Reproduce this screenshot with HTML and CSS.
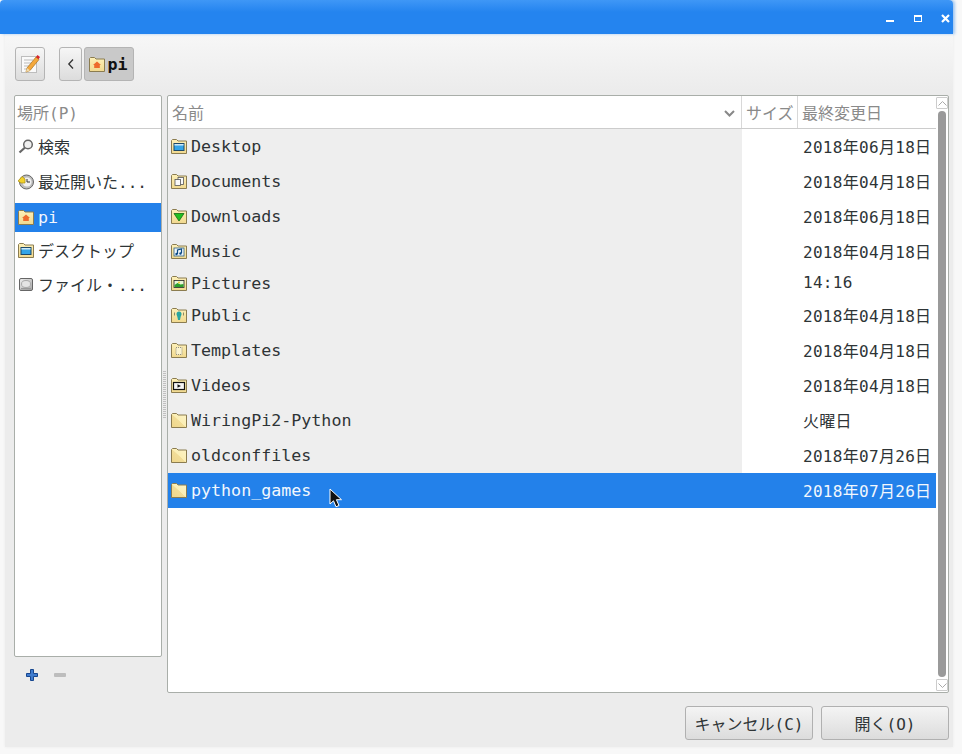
FILE: index.html
```html
<!DOCTYPE html>
<html lang="ja">
<head>
<meta charset="utf-8">
<title>開く</title>
<link rel="stylesheet" href="styles.css">
</head>
<body>
<svg class="defs" width="0" height="0" aria-hidden="true">
  <defs>
    <linearGradient id="fg" x1="0" y1="0" x2="0" y2="1"><stop offset="0" stop-color="#fdf0b8"/><stop offset="1" stop-color="#f1d98f"/></linearGradient>
    <linearGradient id="fp" x1="1" y1="0" x2="0" y2="1"><stop offset="0" stop-color="#fdf4c8"/><stop offset=".5" stop-color="#fbeeb4"/><stop offset=".52" stop-color="#f2dd98"/><stop offset="1" stop-color="#efd68a"/></linearGradient>
    <linearGradient id="gr" x1="0" y1="0" x2="1" y2="1"><stop offset="0" stop-color="#eee"/><stop offset="1" stop-color="#a8a8a8"/></linearGradient>
    <symbol id="folder" viewBox="0 0 16 15">
      <path d="M.5 3V1.500l1-1h4l1.500 1.500h8.500v12.500H.5z" fill="url(#fg)" stroke="#8b7c50"/>
    </symbol>
    <symbol id="folder-plain" viewBox="0 0 16 15">
      <path d="M.5 3V1.500l1-1h4l1.500 1.500h8.500v12.500H.5z" fill="url(#fp)" stroke="#8b7c50"/>
    </symbol>
  </defs>
</svg>
<div class="window">
  <header class="titlebar">
    <span class="wc wc-min"></span>
    <span class="wc wc-max"></span>
    <svg class="wc-close" width="9" height="9" viewBox="0 0 9 9"><path d="M1 1l7 7M8 1L1 8" stroke="#fff" stroke-width="2.200"/></svg>
  </header>
  <main class="content">
    <div class="toolbar">
      <button class="tbtn tbtn-edit">
        <svg width="20" height="22" viewBox="0 0 20 22">
          <rect x="1.500" y="3.500" width="15" height="16" fill="#fafafa" stroke="#bdbdbd"/>
          <path d="M4 7h9M4 10h7M4 13h5M4 16h7" stroke="#bbb"/>
          <path d="M7 15l9-11 3 2.500-9 11-4 1.500z" fill="#f4a83c" stroke="#a8701c" stroke-width=".7"/>
          <path d="M16 4l1.500-2 2.500 2-1.500 2.200z" fill="#d8232a"/>
          <path d="M7 15l-1 4 4-1.500z" fill="#f1dcae"/>
        </svg>
      </button>
      <button class="tbtn tbtn-back">
        <svg width="8" height="12" viewBox="0 0 8 12"><path d="M6 1.500L1.800 6 6 10.500" fill="none" stroke="#333" stroke-width="1.300"/></svg>
      </button>
      <button class="tbtn tbtn-path">
        <svg class="ico" width="16" height="15"><use href="#folder"/><path d="M8 4.500l4 3.500h-1.200v3H5.200V8H4z" fill="#ee6a2c"/></svg>
        <b>pi</b>
      </button>
    </div>

    <div class="panes">
      <div class="side-col">
        <nav class="sidebar">
          <div class="side-head">場所(P)</div>
          <div class="side-row">
            <svg class="ico" width="16" height="15" viewBox="0 0 16 15"><circle cx="10" cy="5.500" r="4.300" fill="#f0f0f0" stroke="#666" stroke-width="1.500"/><path d="M7 8.500L1.500 13.500" stroke="#666" stroke-width="2.200"/></svg>
            <span>検索</span>
          </div>
          <div class="side-row">
            <svg class="ico" width="16" height="16" viewBox="0 0 16 16"><circle cx="8.500" cy="8" r="7" fill="#bdbdbd" stroke="#666"/><circle cx="9" cy="8" r="4.500" fill="#f0f0f0"/><path d="M9 5v3h3" fill="none" stroke="#333"/><path d="M0 7l4-4.500 3 2.500v4H3z" fill="#f2d22c" stroke="#a98c10" stroke-width=".7"/></svg>
            <span>最近開いた...</span>
          </div>
          <div class="side-row side-row-sel">
            <svg class="ico" width="16" height="15"><use href="#folder"/><path d="M8 4.500l4 3.500h-1.200v3H5.200V8H4z" fill="#ee6a2c"/></svg>
            <span>pi</span>
          </div>
          <div class="side-row side-row-short">
            <svg class="ico" width="16" height="15"><use href="#folder"/><rect x="3" y="4.500" width="10" height="7" fill="#33a4e8" stroke="#1c4868"/><rect x="3.500" y="5" width="9" height="1.500" fill="#cfe8f5"/></svg>
            <span>デスクトップ</span>
          </div>
          <div class="side-row">
            <svg class="ico" width="16" height="15" viewBox="0 0 16 15"><rect x="1.500" y="1.500" width="13" height="12" rx="1.500" fill="url(#gr)" stroke="#666"/><ellipse cx="8" cy="7" rx="4.500" ry="3.500" fill="#e4e4e4" stroke="#aaa"/><rect x="3" y="11" width="10" height="1.500" fill="#999"/></svg>
            <span>ファイル・...</span>
          </div>
        </nav>
        <div class="side-actions">
          <svg width="12" height="12" viewBox="0 0 12 12"><path d="M4.500.5h3v4h4v3h-4v4h-3v-4h-4v-3h4z" fill="#3f7ccf" stroke="#17468f"/></svg>
          <span class="minus"></span>
        </div>
      </div>

      <div class="grip"></div>

      <section class="list">
        <div class="list-main">
          <div class="list-head">
            <div class="col col-name">名前
              <svg width="11" height="7" viewBox="0 0 11 7"><path d="M1 1l4.500 4.500L10 1" fill="none" stroke="#888" stroke-width="2"/></svg>
            </div>
            <div class="col col-size">サイズ</div>
            <div class="col col-date">最終変更日</div>
          </div>
          <div class="row">
            <div class="cell-name"><svg class="ico" width="16" height="15"><use href="#folder"/><rect x="3" y="4.500" width="10" height="7" fill="#33a4e8" stroke="#1c4868"/><rect x="3.500" y="5" width="9" height="1.500" fill="#cfe8f5"/></svg>Desktop</div>
            <div class="cell-date">2018年06月18日</div>
          </div>
          <div class="row">
            <div class="cell-name"><svg class="ico" width="16" height="15"><use href="#folder"/><rect x="7" y="3.500" width="5.500" height="7" fill="#fafafa" stroke="#555" stroke-width=".8"/><rect x="4" y="5.500" width="5.500" height="6" fill="#fafafa" stroke="#555" stroke-width=".8"/></svg>Documents</div>
            <div class="cell-date">2018年04月18日</div>
          </div>
          <div class="row">
            <div class="cell-name"><svg class="ico" width="16" height="15"><use href="#folder"/><path d="M3 4.500h10L8 12z" fill="#22c022" stroke="#126a12" stroke-width=".8"/></svg>Downloads</div>
            <div class="cell-date">2018年06月18日</div>
          </div>
          <div class="row">
            <div class="cell-name"><svg class="ico" width="16" height="15"><use href="#folder"/><rect x="3" y="4" width="10" height="8" fill="#eef6fa" stroke="#2b5f86" stroke-width=".8"/><path d="M6.500 10V6l4-1v4" fill="none" stroke="#0c4a86" stroke-width="1.200"/><circle cx="5.500" cy="10" r="1.200" fill="#0c4a86"/><circle cx="9.500" cy="9.500" r="1.200" fill="#0c4a86"/></svg>Music</div>
            <div class="cell-date">2018年04月18日</div>
          </div>
          <div class="row row-low">
            <div class="cell-name"><svg class="ico" width="16" height="15"><use href="#folder"/><rect x="3" y="4.500" width="10" height="7" fill="#e8f4d8" stroke="#222" stroke-width=".8"/><path d="M3.500 11V9l3-2 3 1.500 3-.5v3z" fill="#2ca02c"/><circle cx="8" cy="6.500" r="1" fill="#f2d22c"/></svg>Pictures</div>
            <div class="cell-date">14:16</div>
          </div>
          <div class="row">
            <div class="cell-name"><svg class="ico" width="16" height="15"><use href="#folder"/><circle cx="8" cy="6" r="2.500" fill="#2aa6a0"/><path d="M6 7h4l-1 5H7z" fill="#2aa6a0"/><path d="M3.500 4.500v3M12.500 4.500v3" stroke="#8a8a66"/></svg>Public</div>
            <div class="cell-date">2018年04月18日</div>
          </div>
          <div class="row">
            <div class="cell-name"><svg class="ico" width="16" height="15"><use href="#folder"/><rect x="5" y="4.500" width="6" height="7" fill="#fbf3cf" stroke="#777" stroke-width=".8" stroke-dasharray="1 1"/></svg>Templates</div>
            <div class="cell-date">2018年04月18日</div>
          </div>
          <div class="row">
            <div class="cell-name"><svg class="ico" width="16" height="15"><use href="#folder"/><rect x="2.500" y="4.500" width="11" height="7" fill="#f6f6f6" stroke="#111" stroke-width="1.200"/><path d="M6.500 6.200L10 8l-3.500 1.800z" fill="#111"/></svg>Videos</div>
            <div class="cell-date">2018年04月18日</div>
          </div>
          <div class="row">
            <div class="cell-name"><svg class="ico" width="16" height="15"><use href="#folder-plain"/></svg>WiringPi2-Python</div>
            <div class="cell-date">火曜日</div>
          </div>
          <div class="row">
            <div class="cell-name"><svg class="ico" width="16" height="15"><use href="#folder-plain"/></svg>oldconffiles</div>
            <div class="cell-date">2018年07月26日</div>
          </div>
          <div class="row row-sel">
            <div class="cell-name"><svg class="ico" width="16" height="15"><use href="#folder-plain"/></svg>python_games</div>
            <div class="cell-date">2018年07月26日</div>
          </div>
          <svg class="cursor" width="14" height="20" viewBox="0 0 14 20"><path d="M1 1v15l3.500-3.200 2.500 6 3-1.300-2.600-5.800H12.500z" fill="#111" stroke="#fff"/></svg>
        </div>
        <div class="scrollbar">
          <div class="sb-btn"><svg width="9" height="5" viewBox="0 0 9 5"><path d="M.5 4.500l4-4 4 4" fill="none" stroke="#aaa"/></svg></div>
          <div class="sb-thumb"></div>
          <div class="sb-btn"><svg width="9" height="5" viewBox="0 0 9 5"><path d="M.5.500l4 4 4-4" fill="none" stroke="#aaa"/></svg></div>
        </div>
      </section>
    </div>

    <footer class="actions">
      <button class="btn">キャンセル(C)</button>
      <button class="btn">開く(O)</button>
    </footer>
  </main>
</div>
</body>
</html>
```
FILE: styles.css
```css
* { box-sizing: border-box; }
html, body { margin: 0; padding: 0; }
body {
  width: 962px;
  height: 754px;
  overflow: hidden;
  background: #f8f8f8;
  font-family: "DejaVu Sans Mono", "Noto Sans CJK JP", monospace;
  font-size: 16.67px;
  color: #2e3436;
}
.defs { position: absolute; }
.window {
  width: 948px;
  height: 747px;
  margin-left: 5px;
  display: flex;
  flex-direction: column;
  background: #ececec;
  box-shadow: 0 0 3px rgba(0, 0, 0, .06);
}
.titlebar {
  height: 34px;
  margin: 0 0 0 -5px;
  flex: none;
  display: flex;
  align-items: center;
  background: linear-gradient(#3f97f6, #2484ef 12px);
  border-radius: 4px 4px 0 0;
  box-shadow: 2px 0 3px rgba(36, 132, 239, .4);
  position: relative;
}
.wc { display: block; }
.wc-min { position: absolute; left: 886px; top: 20px; width: 8px; height: 2px; background: #fff; }
.wc-max { position: absolute; left: 914px; top: 15px; width: 8px; height: 7px; border: 1px solid #fff; border-top-width: 2px; }
.wc-close { position: absolute; left: 941px; top: 14px; }
.content {
  flex: 1;
  padding: 13px 4px 7px 9px;
  display: flex;
  flex-direction: column;
  background: linear-gradient(#f7f7f7, #ececec 56px);
}
.toolbar { display: flex; height: 34px; margin-left: 1px; flex: none; }
.tbtn {
  height: 34px;
  padding: 0;
  border: 1px solid #b4b4b4;
  border-radius: 3px;
  background: linear-gradient(#f6f6f6, #dcdcdc);
  display: flex;
  align-items: center;
  justify-content: center;
  font: inherit;
  color: #111;
}
.tbtn-edit { width: 30px; margin-right: 14px; }
.tbtn-back { width: 23px; margin-right: 2px; }
.tbtn-path { width: 50px; background: #c9c9c9; gap: 2px; padding-right: 1px; }
.tbtn-path b { font-weight: 700; }
.panes { display: flex; margin-top: 14px; flex: 1; min-height: 0; }
.side-col { width: 148px; flex: none; display: flex; flex-direction: column; height: 598px; }
.sidebar {
  height: 562px;
  flex: none;
  background: #fff;
  border: 1px solid #a9aea9;
  border-radius: 2px;
  font-size: 16px;
}
.side-head {
  height: 33px;
  border-bottom: 1px solid #ccc;
  color: #8a8a8a;
  padding: 0 0 0 2px;
  line-height: 35px;
}
.side-row {
  height: 35px;
  display: flex;
  align-items: center;
  padding-left: 3px;
  gap: 4px;
  white-space: nowrap;
}
.side-row span { position: relative; top: -1px; }
.side-row-sel {
  height: 29px;
  margin: 4px 0 2px;
  background: #2381ea;
  color: #f2f7fd;
  font-size: 16.67px;
}
.side-row-sel span { top: 0; }
.side-row-short { height: 33px; }
.ico { flex: none; display: block; }
.side-actions { display: flex; align-items: center; padding: 12px 0 0 12px; gap: 16px; }
.minus { width: 12px; height: 4px; border-radius: 1px; background: #bdbdbd; }
.grip {
  width: 5px;
  flex: none;
  margin: 276px 0 275px;
  background-image: linear-gradient(#c0c0c0 1px, transparent 1px);
  background-size: 2px 2px;
  border-left: 1px solid #ececec;
  border-right: 1px solid #ececec;
}
.list {
  flex: 1;
  height: 598px;
  display: flex;
  background: #fff;
  border: 1px solid #a9aea9;
  border-radius: 2px;
  min-width: 0;
}
.list-main { flex: 1; min-width: 0; position: relative; }
.list-head { height: 33px; display: flex; border-bottom: 1px solid #ccc; color: #8a8a8a; line-height: 35px; font-size: 16px; }
.col { flex: none; padding-left: 4px; border-right: 1px solid #d8d8d8; position: relative; }
.col-name { width: 574px; }
.col-name svg { position: absolute; right: 6px; top: 14px; }
.col-size { width: 56px; }
.col-date { flex: 1; border-right: 0; }
.row { height: 35px; display: flex; align-items: center; white-space: nowrap; }
.row-low { height: 29px; }
.cell-name {
  width: 574px;
  height: 100%;
  flex: none;
  display: flex;
  align-items: center;
  gap: 4px;
  padding-left: 3px;
  background: #eeeeee;
}
.cell-date { padding-left: 61px; font-size: 16px; letter-spacing: .3px; position: relative; top: -1px; }
.row-sel { background: #2381ea; color: #f2f7fd; }
.row-sel .cell-name { background: transparent; }
.cursor { position: absolute; left: 161px; top: 392px; }
.scrollbar { width: 12px; flex: none; display: flex; flex-direction: column; align-items: center; padding: 1px 0; }
.sb-btn { width: 12px; height: 12px; flex: none; border: 1px solid #ccc; border-radius: 1px; display: flex; align-items: center; justify-content: center; background: #fff; }
.sb-thumb { flex: 1; width: 8px; margin: 2px 0; background: #9a9a9a; border-radius: 4px; }
.actions { display: flex; justify-content: flex-end; gap: 8px; margin-top: 13px; flex: none; font-size: 16px; }
.btn {
  width: 128px;
  height: 34px;
  border: 1px solid #b0b0b0;
  border-radius: 3px;
  background: linear-gradient(#f4f4f4, #dcdcdc);
  font: inherit;
  color: #2e3436;
  padding: 0;
}
```
